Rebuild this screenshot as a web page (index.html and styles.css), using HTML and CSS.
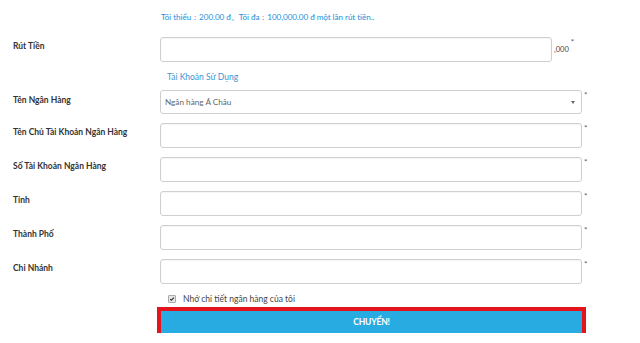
FILE: index.html
```html
<!DOCTYPE html>
<html>
<head>
<meta charset="utf-8">
<link rel="stylesheet" href="styles.css">
</head>
<body>
<form class="form">
  <div class="hint">Tối thiểu：200.00 đ。Tối đa：100,000.00 đ một lần rút tiền..</div>

  <div class="row row-amount">
    <label class="label">Rút Tiền</label>
    <div class="field">
      <input class="input input-amount" type="text">
      <span class="suffix">,000</span>
      <span class="req">*</span>
    </div>
  </div>

  <div class="account">Tài Khoản Sử Dụng</div>

  <div class="row row-select">
    <label class="label">Tên Ngân Hàng</label>
    <div class="field">
      <div class="select">
        <span class="select-text">Ngân hàng Á Châu</span>
        <span class="caret"></span>
      </div>
      <span class="req">*</span>
    </div>
  </div>

  <div class="row">
    <label class="label">Tên Chủ Tài Khoản Ngân Hàng</label>
    <div class="field"><input class="input" type="text"><span class="req">*</span></div>
  </div>
  <div class="row">
    <label class="label">Số Tài Khoản Ngân Hàng</label>
    <div class="field"><input class="input" type="text"><span class="req">*</span></div>
  </div>
  <div class="row">
    <label class="label">Tỉnh</label>
    <div class="field"><input class="input" type="text"><span class="req">*</span></div>
  </div>
  <div class="row">
    <label class="label">Thành Phố</label>
    <div class="field"><input class="input" type="text"><span class="req">*</span></div>
  </div>
  <div class="row">
    <label class="label">Chi Nhánh</label>
    <div class="field"><input class="input" type="text"><span class="req">*</span></div>
  </div>

  <div class="remember">
    <span class="check"><svg viewBox="0 0 8 8" width="8" height="8"><path d="M1.6 4.2 L3.2 5.8 L6.4 2.2" fill="none" stroke="#222" stroke-width="1.4"/></svg></span>
    <span class="remember-text">Nhớ chi tiết ngân hàng của tôi</span>
  </div>

  <div class="submit-row">
    <button class="submit" type="button">CHUYỂN!</button>
  </div>
</form>
</body>
</html>
```

FILE: styles.css
```css
* { box-sizing: border-box; }
html, body { margin: 0; padding: 0; background: #fff; }
body {
  font-family: Lato, "Open Sans", "Liberation Sans", sans-serif;
  font-size: 8.5px;
  color: #333;
}
.form {
  padding: 12px 0 0 13px;
  width: 640px;
}
.hint {
  margin-left: 148px;
  line-height: 10px;
  color: #1b8fdb;
  font-size: 8.1px;
  letter-spacing: -0.05px;
}
.row {
  display: flex;
  align-items: flex-start;
  margin-top: 9px;
}
.row-amount { margin-top: 15px; }
.row-select { margin-top: 8px; }
.label {
  width: 147px;
  flex: none;
  font-weight: bold;
  line-height: 10px;
  padding-top: 4px;
  color: #333;
}
.row-select .label { padding-top: 5px; }
.field {
  display: flex;
  align-items: flex-start;
}
.input {
  width: 422px;
  height: 25px;
  border: 1px solid #cfcfcf;
  border-radius: 3px;
  background: #fff;
  box-shadow: inset 0 1px 1px rgba(0,0,0,0.04);
  padding: 0 5px;
  margin: 0;
  font: inherit;
}
.input-amount { width: 392px; }
.suffix {
  margin-left: 2px;
  margin-top: 9px;
  line-height: 8px;
  font-size: 7.5px;
  color: #444;
}
.req {
  margin-left: 2px;
  margin-top: 1px;
  font-size: 8px;
  line-height: 8px;
  color: #555;
}
.account {
  margin: 10px 0 0 154px;
  line-height: 10px;
  color: #3a95d2;
}
.select {
  width: 422px;
  height: 24px;
  border: 1px solid #cfcfcf;
  border-radius: 3px;
  background: #fff;
  display: flex;
  align-items: center;
  justify-content: space-between;
  padding: 0 6px 0 4px;
}
.select-text { color: #666; line-height: 10px; font-size: 8.2px; }
.caret {
  width: 0;
  height: 0;
  border-left: 2.5px solid transparent;
  border-right: 2.5px solid transparent;
  border-top: 3.5px solid #666;
}
.remember {
  display: flex;
  align-items: center;
  margin: 10px 0 0 155px;
  line-height: 10px;
}
.check {
  width: 8px;
  height: 8px;
  border: 1px solid #aaa;
  border-radius: 1px;
  background: #e6e6e6;
  display: flex;
  align-items: center;
  justify-content: center;
}
.check svg { display: block; }
.remember-text {
  margin-left: 7px;
  color: #444;
}
.submit-row {
  margin: 7px 0 0 148px;
}
.submit {
  display: block;
  width: 421px;
  height: 22px;
  border: none;
  background: #27abe0;
  color: #fff;
  font-family: inherit;
  font-weight: bold;
  font-size: 8.5px;
  letter-spacing: -0.2px;
  outline: 4px solid #e4141d;
  padding: 0;
  margin: 0;
}
```
